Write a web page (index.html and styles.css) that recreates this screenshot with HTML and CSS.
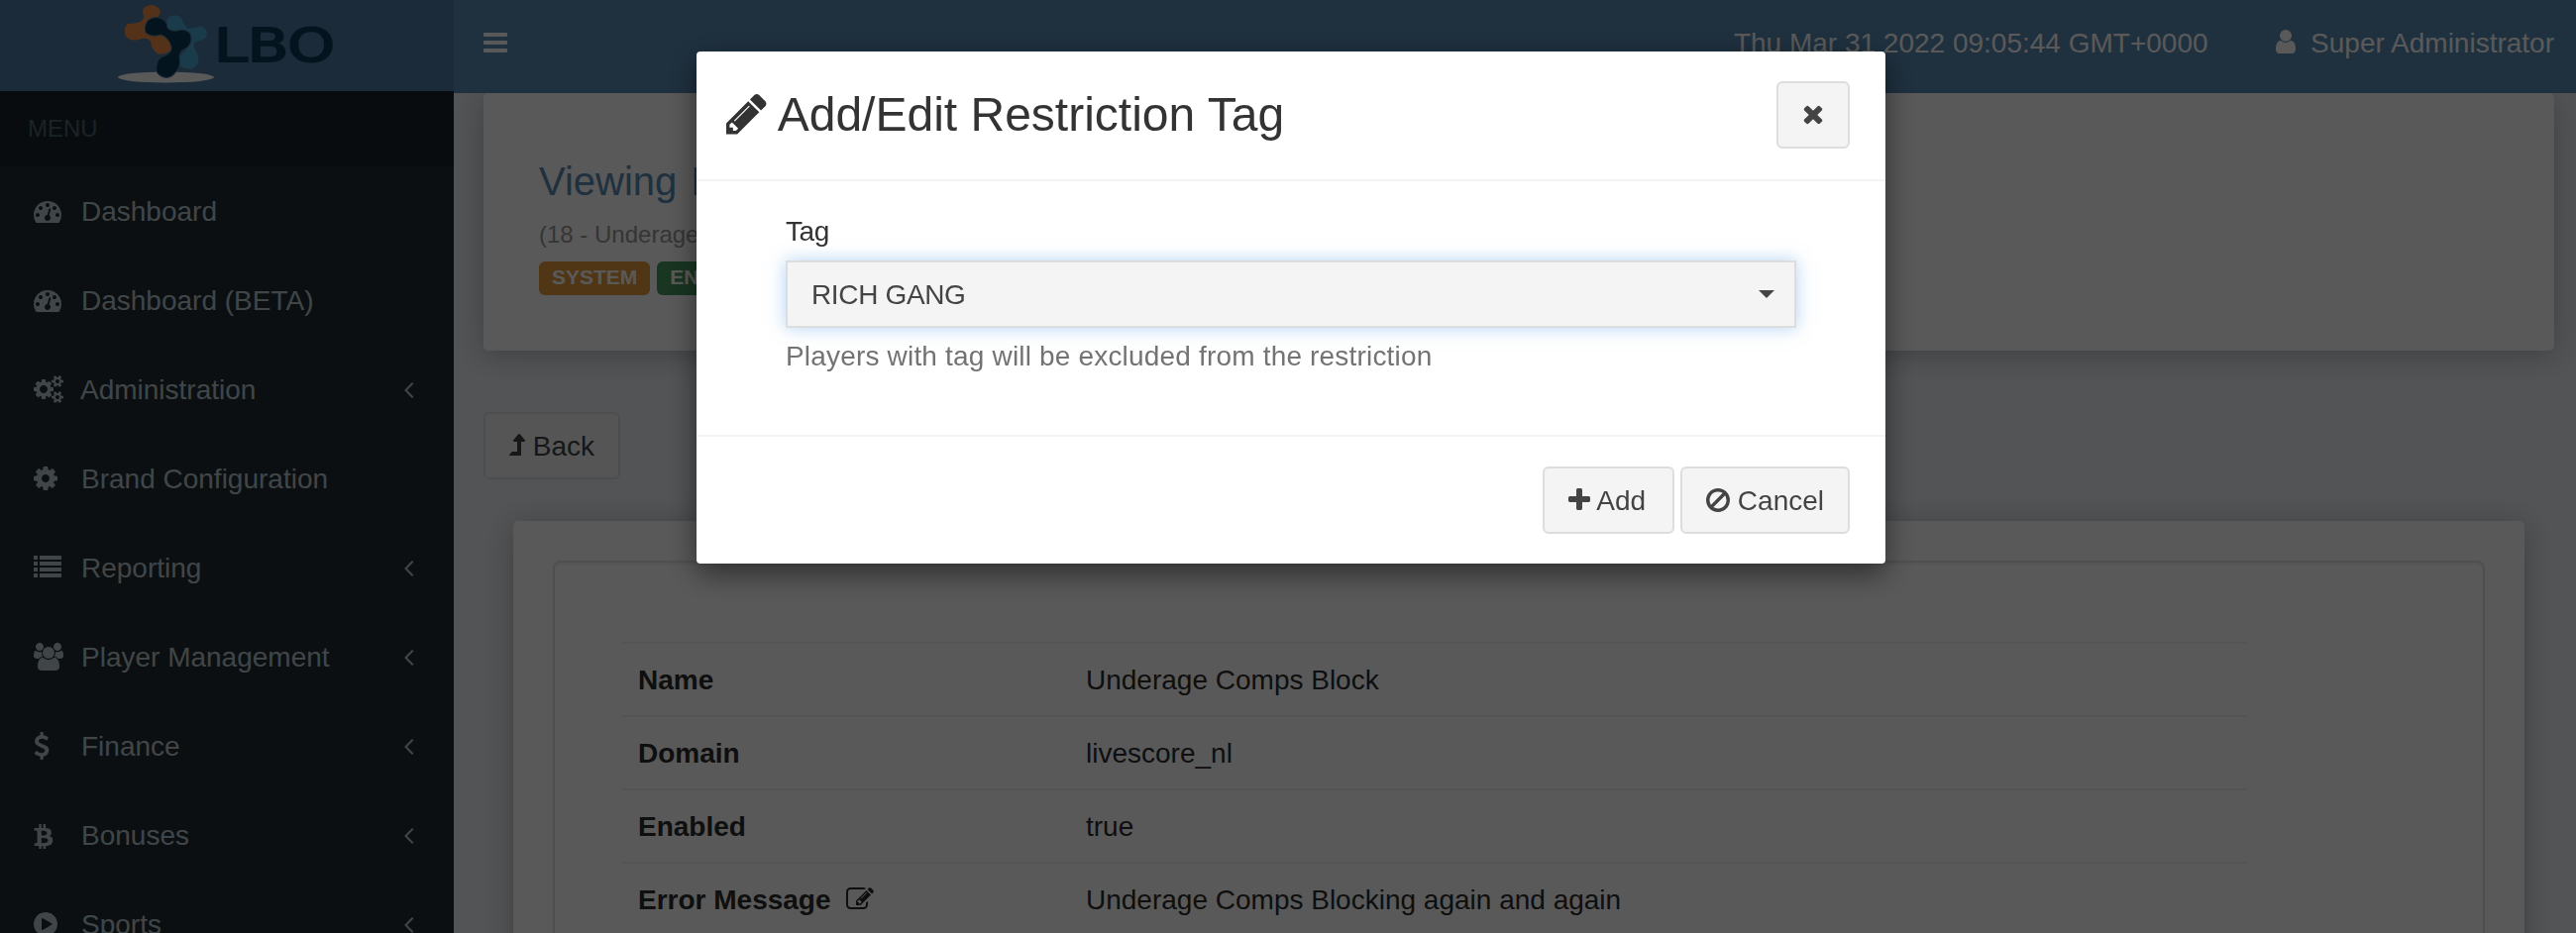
FILE: index.html
```
<!DOCTYPE html>
<html lang="en">
<head>
<meta charset="utf-8">
<title>Restriction</title>
<link rel="stylesheet" href="styles.css">
</head>
<body>
<svg class="defs" width="0" height="0">
  <symbol id="tachometer" viewBox="0 0 1792 1792"><path d="M384 1152q0-53-37.5-90.5t-90.5-37.5-90.5 37.5-37.5 90.5 37.5 90.5 90.5 37.5 90.5-37.5 37.5-90.5zm192-448q0-53-37.5-90.5t-90.5-37.5-90.5 37.5-37.5 90.5 37.5 90.5 90.5 37.5 90.5-37.5 37.5-90.5zm428 481l101-382q6-26-7.5-48.5t-38.5-29.5-48 6.5-30 39.5l-101 382q-60 5-107 43.5t-63 98.5q-20 77 20 146t117 89 146-20 89-117q16-60-6-117t-72-91zm660-33q0-53-37.5-90.5t-90.5-37.5-90.5 37.5-37.5 90.5 37.5 90.5 90.5 37.5 90.5-37.5 37.5-90.5zm-640-640q0-53-37.5-90.5t-90.5-37.5-90.5 37.5-37.5 90.5 37.5 90.5 90.5 37.5 90.5-37.5 37.5-90.5zm448 192q0-53-37.5-90.5t-90.5-37.5-90.5 37.5-37.5 90.5 37.5 90.5 90.5 37.5 90.5-37.5 37.5-90.5zm320 448q0 261-141 483-19 29-54 29h-1402q-35 0-54-29-141-221-141-483 0-182 71-348t191-286 286-191 348-71 348 71 286 191 191 286 71 348z"/></symbol>
  <symbol id="cog" viewBox="128 0 1536 1792"><path d="M1152 896q0-106-75-181t-181-75-181 75-75 181 75 181 181 75 181-75 75-181zm512-109v222q0 12-8 23t-20 13l-185 28q-19 54-39 91 35 50 107 138 10 12 10 25t-9 23q-27 37-99 108t-94 71q-12 0-26-9l-138-108q-44 23-91 38-16 136-29 186-7 28-36 28h-222q-14 0-24.5-8.5t-11.5-21.5l-28-184q-49-16-90-37l-141 107q-10 9-25 9-14 0-25-11-126-114-165-168-7-10-7-23 0-12 8-23 15-21 51-66.5t54-70.5q-27-50-41-99l-183-27q-13-2-21-12.5t-8-23.5v-222q0-12 8-23t19-13l186-28q14-46 39-92-40-57-107-138-10-12-10-24 0-10 9-23 26-36 98.5-107.5t94.5-71.5q13 0 26 10l138 107q44-23 91-38 16-136 29-186 7-28 36-28h222q14 0 24.5 8.5t11.5 21.5l28 184q49 16 90 37l142-107q9-9 24-9 13 0 25 10 129 119 165 170 7 8 7 22 0 12-8 23-15 21-51 66.5t-54 70.5q26 50 41 98l183 28q13 2 21 12.5t8 23.5z"/></symbol>
  <symbol id="cogs" viewBox="-64 0 1920 1792"><path d="M832 896q0-106-75-181t-181-75-181 75-75 181 75 181 181 75 181-75 75-181zm768 512q0-52-38-90t-90-38-90 38-38 90q0 53 37.5 90.5t90.5 37.5 90.5-37.5 37.5-90.5zm0-1024q0-52-38-90t-90-38-90 38-38 90q0 53 37.5 90.5t90.5 37.5 90.5-37.5 37.5-90.5zm-384 421v185q0 10-7 19.5t-16 10.5l-155 24q-11 35-32 76 34 48 90 115 7 11 7 20 0 12-7 19-23 30-82.5 89.5t-78.5 59.5q-11 0-21-7l-115-90q-37 19-77 31-11 108-23 155-7 24-30 24h-186q-11 0-20-7.5t-10-17.5l-23-153q-34-10-75-31l-118 89q-7 7-20 7-11 0-21-8-144-133-144-160 0-9 7-19 10-14 41-53t47-61q-23-44-35-82l-152-24q-10-1-17-9.5t-7-19.5v-185q0-10 7-19.5t16-10.5l155-24q11-35 32-76-34-48-90-115-7-11-7-20 0-12 7-20 22-30 82-89t79-59q11 0 21 7l115 90q34-18 77-32 11-108 23-154 7-24 30-24h186q11 0 20 7.5t10 17.5l23 153q34 10 75 31l118-89q8-7 20-7 11 0 21 8 144 133 144 160 0 8-7 19-12 16-42 54t-45 60q23 48 34 82l152 23q10 2 17 10.5t7 19.5zm640 533v140q0 16-149 31-12 27-30 52 51 113 51 138 0 4-4 7-122 71-124 71-8 0-46-47t-52-68q-20 2-30 2t-30-2q-14 21-52 68t-46 47q-2 0-124-71-4-3-4-7 0-25 51-138-18-25-30-52-149-15-149-31v-140q0-16 149-31 13-29 30-52-51-113-51-138 0-4 4-7 4-2 35-20t59-34 30-16q8 0 46 46.5t52 67.5q20-2 30-2t30 2q51-71 92-112l6-2q4 0 124 70 4 3 4 7 0 25-51 138 17 23 30 52 149 15 149 31zm0-1024v140q0 16-149 31-12 27-30 52 51 113 51 138 0 4-4 7-122 71-124 71-8 0-46-47t-52-68q-20 2-30 2t-30-2q-14 21-52 68t-46 47q-2 0-124-71-4-3-4-7 0-25 51-138-18-25-30-52-149-15-149-31v-140q0-16 149-31 13-29 30-52-51-113-51-138 0-4 4-7 4-2 35-20t59-34 30-16q8 0 46 46.5t52 67.5q20-2 30-2t30 2q51-71 92-112l6-2q4 0 124 70 4 3 4 7 0 25-51 138 17 23 30 52 149 15 149 31z"/></symbol>
  <symbol id="list" viewBox="0 0 1792 1792"><path d="M0 128h256v256H0zM384 128h1408v256H384zM0 512h256v256H0zM384 512h1408v256H384zM0 896h256v256H0zM384 896h1408v256H384zM0 1280h256v256H0zM384 1280h1408v256H384z"/></symbol>
  <symbol id="users" viewBox="0 0 1920 1792"><path d="M593 896q-162 5-265 128h-134q-82 0-138-40.5t-56-118.5q0-353 124-353 6 0 43.5 21t97.5 42.5 119 21.5q67 0 133-23-5 37-5 66 0 139 81 256zm1071 637q0 120-73 189.5t-194 69.5h-874q-121 0-194-69.5t-73-189.5q0-53 3.5-103.5t14-109 26.5-108.5 43-97.5 62-81 85.5-53.5 111.5-20q10 0 43 21.5t73 48 107 48 135 21.5 135-21.5 107-48 73-48 43-21.5q61 0 111.5 20t85.5 53.5 62 81 43 97.5 26.5 108.5 14 109 3.5 103.5zm-1024-1277q0 106-75 181t-181 75-181-75-75-181 75-181 181-75 181 75 75 181zm704 384q0 159-112.5 271.5t-271.5 112.5-271.5-112.5-112.5-271.5 112.5-271.5 271.5-112.5 271.5 112.5 112.5 271.5zm576 225q0 78-56 118.5t-138 40.5h-134q-103-123-265-128 81-117 81-256 0-29-5-66 66 23 133 23 59 0 119-21.5t97.5-42.5 43.5-21q124 0 124 353zm-128-609q0 106-75 181t-181 75-181-75-75-181 75-181 181-75 181 75 75 181z"/></symbol>
  <symbol id="dollar" viewBox="384 0 1024 1792"><path d="M1362 1185q0 153-99.5 263.5t-258.5 136.5v175q0 14-9 23t-23 9h-135q-13 0-22.5-9.5t-9.5-22.5v-175q-66-9-127.5-31t-101.5-44.5-74-48-46.5-37.5-17.5-18q-17-21-2-41l103-135q7-10 23-12 15-2 24 9l2 2q113 99 243 125 37 8 74 8 81 0 142.5-43t61.5-122q0-28-15-53t-33.5-42-58.5-37.5-66-32-80-32.5q-39-16-61.5-25t-61.5-26.5-62.5-31-56.5-35.5-53.5-42.5-43.5-49-35.5-58-21-66.5-8.5-78q0-138 98-242t255-134v-180q0-13 9.5-22.5t22.5-9.5h135q14 0 23 9t9 23v176q57 6 110.5 23t87 33.5 63.5 37.5 39 29 15 14q17 18 5 38l-81 146q-8 15-23 16-14 3-27-7-3-3-14.5-12t-39-26.5-58.5-32-74.5-26-85.5-11.5q-95 0-155 43t-60 111q0 26 8.5 48t29.5 41.5 39.5 33 56 31 60.5 27 70 27.5q53 20 81 31.5t76 35 75.5 42.5 62 50 53 63.5 31.5 76.5 13 94z"/></symbol>
  <symbol id="btc" viewBox="256 0 1280 1792"><path d="M1399 711q18 182-131 258 117 28 175 103t45 214q-7 71-32.5 125t-64.5 89-97 58.5-121.5 34.5-145.5 15v255h-154v-251q-80 0-122-1v252h-154v-255q-18 0-54-.5t-55-.5h-200l31-183h111q50 0 58-51v-402h16q-6-1-16-1v-287q-13-68-89-68h-111v-164l212 1q64 0 97-1v-252h154v247q82-2 122-2v-245h154v252q79 7 140 22.5t113 45 82.5 78 36.5 114.5zm-215 545q0-36-15-64t-37-46-57.5-30.5-65.5-18.5-74-9-69-3-64.5 1-47.5 1v338q8 0 37 .5t48 .5 53-1.5 58.5-4 57-8.5 55.5-14 47.5-21 39.5-30 24.5-40 9.5-51zm-71-476q0-33-12.5-58.5t-30.5-42-48-28-55-16.5-61.5-8-58-2.5-54 1-39.5.5v307q5 0 34.5.5t46.5 0 50-2 55-5.5 51.5-11 48.5-18.5 37-27 27-38.5 9-51z"/></symbol>
  <symbol id="play" viewBox="128 0 1536 1792"><path d="M896 128q209 0 385.5 103t279.5 279.5 103 385.5-103 385.5-279.5 279.5-385.5 103-385.5-103-279.5-279.5-103-385.5 103-385.5 279.5-279.5 385.5-103zm384 823q32-18 32-55t-32-55l-544-320q-31-19-64-1-32 19-32 56v640q0 37 32 56 16 8 32 8 17 0 32-9z"/></symbol>
  <symbol id="angle" viewBox="608 0 640 1792"><path d="M1203 544q0 13-10 23l-393 393 393 393q10 10 10 23t-10 23l-50 50q-10 10-23 10t-23-10l-466-466q-10-10-10-23t10-23l466-466q10-10 23-10t23 10l50 50q10 10 10 23z"/></symbol>
  <symbol id="bars" viewBox="128 0 1536 1792"><rect x="128" y="256" width="1536" height="256" rx="60"/><rect x="128" y="768" width="1536" height="256" rx="60"/><rect x="128" y="1280" width="1536" height="256" rx="60"/></symbol>
  <symbol id="user" viewBox="256 0 1280 1792"><path d="M1536 1399q0 109-62.5 187t-150.5 78h-854q-88 0-150.5-78t-62.5-187q0-85 8.5-160.5t31.5-152 58.5-131 94-89 134.5-34.5q131 128 313 128t313-128q76 0 134.5 34.5t94 89 58.5 131 31.5 152 8.5 160.5zm-256-887q0 159-112.5 271.5t-271.5 112.5-271.5-112.5-112.5-271.5 112.5-271.5 271.5-112.5 271.5 112.5 112.5 271.5z"/></symbol>
  <symbol id="pencil" viewBox="128 0 1536 1792"><path d="M491 1536l91-91-235-235-91 91v107h128v128h107zm523-928q0-22-22-22-10 0-17 7l-542 542q-7 7-7 17 0 22 22 22 10 0 17-7l542-542q7-7 7-17zm-54-192l416 416-832 832h-416v-416zm683 96q0 53-37 90l-166 166-416-416 166-165q36-38 90-38 53 0 91 38l235 234q37 39 37 91z"/></symbol>
  <symbol id="times" viewBox="192 0 1408 1792"><path d="M1490 1322q0 40-28 68l-136 136q-28 28-68 28t-68-28l-294-294-294 294q-28 28-68 28t-68-28l-136-136q-28-28-28-68t28-68l294-294-294-294q-28-28-28-68t28-68l136-136q28-28 68-28t68 28l294 294 294-294q28-28 68-28t68 28l136 136q28 28 28 68t-28 68l-294 294 294 294q28 28 28 68z"/></symbol>
  <symbol id="plus" viewBox="192 0 1408 1792"><path d="M1600 736v192q0 40-28 68t-68 28h-416v416q0 40-28 68t-68 28h-192q-40 0-68-28t-28-68v-416h-416q-40 0-68-28t-28-68v-192q0-40 28-68t68-28h416v-416q0-40 28-68t68-28h192q40 0 68 28t28 68v416h416q40 0 68 28t28 68z"/></symbol>
  <symbol id="ban" viewBox="128 0 1536 1792"><path d="M1440 893q0-161-87-295l-754 753q137 89 297 89 111 0 211.5-43.5t173.5-116.5 116-174.5 43-212.5zm-999 299l755-754q-135-91-300-91-148 0-273 73t-198 199-73 274q0 162 89 299zm1223-299q0 157-61 300t-163.5 246-245 164-298.5 61-298.5-61-245-164-163.5-246-61-300 61-299.5 163.5-245.5 245-164 298.5-61 298.5 61 245 164 163.5 245.5 61 299.5z"/></symbol>
  <symbol id="level-up" viewBox="281 -72 1024 1792"><path d="M1299 531q-18 37-58 37h-192v864q0 14-9 23t-23 9h-704q-21 0-29-18-8-20 4-35l160-192q9-11 25-11h320v-640h-192q-40 0-58-37-17-37 9-68l320-384q18-22 49-22t49 22l320 384q27 32 9 68z"/></symbol>
  <symbol id="edit" viewBox="0 0 1792 1792"><path d="M888 1184l116-116-152-152-116 116v56h96v96h56zm440-720q-16-16-33 1l-350 350q-17 17-1 33t33-1l350-350q17-17 1-33zm80 594v190q0 119-84.5 203.5t-203.5 84.5h-832q-119 0-203.5-84.5t-84.5-203.5v-832q0-119 84.5-203.5t203.5-84.5h832q63 0 117 25 15 7 18 23 3 17-9 29l-49 49q-14 14-32 8-23-6-45-6h-832q-66 0-113 47t-47 113v832q0 66 47 113t113 47h832q66 0 113-47t47-113v-126q0-13 9-22l64-64q15-15 35-7t20 29zm-96-738l288 288-672 672h-288v-288zm444 132l-92 92-288-288 92-92q28-28 68-28t68 28l152 152q28 28 28 68t-28 68z"/></symbol>
</svg>

<div class="app">
  <aside class="sidebar">
    <div class="logo">
      <svg width="240" height="92" viewBox="0 0 240 92">
        <ellipse cx="48.500" cy="78" rx="48.500" ry="5.500" fill="#fff"/>
        <g fill="#ee9148">
          <path d="M26 8Q34 2 41 8Q45 13 39 19Q35 22 37 28L40 35Q45 37 50 37Q56 42 54 50Q48 56 40 54Q34 50 33 42Q30 38 24 39Q14 43 8 37Q5 29 10 24Q17 24 23 22Q28 18 25 13Z"/>
        </g>
        <g fill="#4ba9d2">
          <path d="M50 19Q57 12 64 18Q66 25 71 29Q78 29 84 26Q92 31 89 38Q83 42 77 43Q76 48 81 56Q83 65 76 69Q68 71 63 66Q60 59 65 54Q73 49 72 38Q68 29 60 31Q51 32 48 26Z"/>
        </g>
        <g fill="#0d3a58" stroke="#507ca3" stroke-width="1">
          <path d="M31 20Q39 15 46 20Q50 23 50 28Q53 32 60 31Q68 28 73 34Q76 42 70 48Q62 51 62 57Q64 66 59 72Q54 80 46 78Q37 75 39 66Q40 58 48 56Q55 53 54 47Q51 38 44 35Q34 38 28 33Q26 25 31 20Z"/>
        </g>
        <text class="logo-text" x="97" y="61.500" textLength="122" lengthAdjust="spacingAndGlyphs">LBO</text>
      </svg>
    </div>
    <div class="menu-head">MENU</div>
    <nav>
      <a class="item"><svg class="ic w28"><use href="#tachometer"/></svg><span>Dashboard</span></a>
      <a class="item"><svg class="ic w28"><use href="#tachometer"/></svg><span>Dashboard (BETA)</span></a>
      <a class="item"><svg class="ic w30"><use href="#cogs"/></svg><span>Administration</span><svg class="ic w10"><use href="#angle"/></svg></a>
      <a class="item"><svg class="ic w24"><use href="#cog"/></svg><span>Brand Configuration</span></a>
      <a class="item"><svg class="ic w28"><use href="#list"/></svg><span>Reporting</span><svg class="ic w10"><use href="#angle"/></svg></a>
      <a class="item"><svg class="ic w30"><use href="#users"/></svg><span>Player Management</span><svg class="ic w10"><use href="#angle"/></svg></a>
      <a class="item"><svg class="ic w16"><use href="#dollar"/></svg><span>Finance</span><svg class="ic w10"><use href="#angle"/></svg></a>
      <a class="item"><svg class="ic w20"><use href="#btc"/></svg><span>Bonuses</span><svg class="ic w10"><use href="#angle"/></svg></a>
      <a class="item"><svg class="ic w24"><use href="#play"/></svg><span>Sports</span><svg class="ic w10"><use href="#angle"/></svg></a>
    </nav>
  </aside>
  <div class="main">
    <header class="navbar">
      <svg class="ic w24"><use href="#bars"/></svg>
      <span class="date">Thu Mar 31 2022 09:05:44 GMT+0000</span>
      <span class="account"><svg class="ic w20"><use href="#user"/></svg>&nbsp; Super Administrator</span>
    </header>
    <section class="card intro">
      <h3>Viewing Restriction</h3>
      <p>(18 - Underage Comps Block)</p>
      <div class="labels"><span class="label system">SYSTEM</span><span class="label enabled">ENABLED</span></div>
    </section>
    <button class="btn back"><svg class="ic w16"><use href="#level-up"/></svg> Back</button>
    <section class="card details">
      <div class="well">
        <dl>
          <div class="row"><dt>Name</dt><dd>Underage Comps Block</dd></div>
          <div class="row"><dt>Domain</dt><dd>livescore_nl</dd></div>
          <div class="row"><dt>Enabled</dt><dd>true</dd></div>
          <div class="row"><dt>Error Message&nbsp; <svg class="ic w28"><use href="#edit"/></svg></dt><dd>Underage Comps Blocking again and again</dd></div>
        </dl>
      </div>
    </section>
  </div>
</div>

<div class="backdrop">
  <div class="modal">
    <div class="modal-header">
      <h2><svg class="title-icon"><use href="#pencil"/></svg> Add/Edit Restriction Tag</h2>
      <button class="btn close"><svg class="ic w22"><use href="#times"/></svg></button>
    </div>
    <div class="modal-body">
      <label>Tag</label>
      <div class="select"><span>RICH GANG</span><i class="caret"></i></div>
      <p class="help">Players with tag will be excluded from the restriction</p>
    </div>
    <div class="modal-footer">
      <button class="btn add"><svg class="ic w22"><use href="#plus"/></svg> Add</button>
      <button class="btn"><svg class="ic w24"><use href="#ban"/></svg> Cancel</button>
    </div>
  </div>
</div>
</body>
</html>
```
FILE: styles.css
```
* { box-sizing: border-box; }
body {
  margin: 0;
  height: 942px;
  overflow: hidden;
  font: 28px/40px "Liberation Sans", Arial, sans-serif;
  color: #333;
  background: #ecf0f5;
}
h2, h3, p, dl, dd { margin: 0; }
.defs { display: block; }

.ic { height: 28px; fill: currentColor; vertical-align: -4px; flex: none; }
.w10 { width: 10px; }
.w16 { width: 16px; }
.w20 { width: 20px; }
.w22 { width: 22px; }
.w24 { width: 24px; }
.w28 { width: 28px; }
.w30 { width: 30px; }

.app { display: flex; height: 942px; overflow: hidden; }

.sidebar { width: 458px; flex: none; background: #222d32; }
.logo { height: 92px; padding-left: 119px; background: #507ca3; }
.logo svg { display: block; }
.logo-text {
  font: 47px "DejaVu Sans", sans-serif;
  fill: #0d3a58;
  stroke: #0d3a58;
  stroke-width: 2px;
  stroke-linejoin: round;
}
.menu-head {
  height: 76px;
  padding: 0 28px;
  font-size: 24px;
  line-height: 76px;
  color: #4b646f;
  background: #1c2328;
}
.item {
  display: flex;
  align-items: center;
  height: 90px;
  padding: 0 40px 0 34px;
  color: #b8c7ce;
}
.item span { flex: 1; padding-top: 2px; }
.item .ic.w10 { margin-top: -1px; }
.item .w16:first-child { margin-right: 32px; }
.item .w20:first-child { margin-right: 28px; }
.item .w24:first-child { margin-right: 24px; }
.item .w28:first-child { margin-right: 20px; }
.item .w30:first-child { margin-right: 18px; }
.item:nth-child(3) .w30 { margin-right: 17px; }

.main { flex: 1; min-width: 0; display: flex; flex-direction: column; align-items: flex-start; }
.navbar {
  position: relative;
  z-index: 1;
  align-self: stretch;
  flex: none;
  display: flex;
  align-items: center;
  height: 94px;
  padding: 0 22px 8px 30px;
  color: #fff;
  background: #598ab4;
}
.navbar span { padding-top: 1px; }
.navbar span .ic { vertical-align: -3px; }
.date { margin-left: auto; margin-right: 68px; }

.card { background: #fff; border-radius: 5px; box-shadow: 0 4px 30px rgba(0, 0, 0, .25); }
.intro { align-self: stretch; flex: none; height: 260px; margin: 0 22px 0 30px; padding: 62px 56px 0; }
.intro h3 { font-size: 40px; line-height: 54px; font-weight: normal; word-spacing: 3px; color: #598ab4; }
.intro p { margin-top: 10px; font-size: 24px; line-height: 34px; color: #999; }
.labels { display: flex; gap: 7px; margin-top: 10px; }
.label { height: 34px; padding: 0 13px; border-radius: 6px; font-size: 21px; line-height: 31px; font-weight: bold; color: #fff; }
.system { background: #e49a39; }
.enabled { background: #479a61; }

.btn {
  height: 68px;
  margin: 0;
  padding: 2px 24px 0;
  border: 2px solid #ddd;
  border-radius: 6px;
  font: inherit;
  color: #444;
  background: #f4f4f4;
}
.close { padding-top: 0; }
.add { width: 133px; text-align: left; }
.back { margin: 62px 0 42px 30px; flex: none; }

.details { align-self: stretch; height: 520px; flex: none; margin: 0 52px 0 60px; padding: 40px 40px 0; }
.well {
  height: 480px;
  padding: 80px 238px 0 68px;
  border: 2px solid #e3e3e3;
  border-radius: 8px;
  box-shadow: inset 0 2px 2px rgba(0, 0, 0, .05);
}
.row { display: flex; height: 74px; padding: 17px 16px 15px; border-top: 2px solid #f0f0f0; color: #2b2b2b; }
.row dt { width: 452px; font-weight: bold; }

.backdrop {
  position: fixed;
  inset: 0;
  z-index: 10;
  padding: 52px 0 0 703px;
  background: rgba(0, 0, 0, .65);
}
.modal { width: 1200px; height: 517px; border-radius: 4px; background: #fff; box-shadow: 0 10px 30px rgba(0, 0, 0, .5); }
.modal-header {
  display: flex;
  justify-content: space-between;
  height: 131px;
  padding: 30px 36px 0 30px;
  border-bottom: 2px solid #f4f4f4;
}
.modal-header h2 { font-size: 48px; line-height: 68px; font-weight: normal; }
.title-icon { width: 41px; height: 48px; fill: currentColor; vertical-align: -7px; }
.modal-body { height: 256px; padding: 31px 90px 0; }
.modal-body label { display: block; letter-spacing: -.4px; }
.select {
  display: flex;
  align-items: center;
  justify-content: space-between;
  height: 68px;
  margin-top: 9px;
  padding: 0 20px 0 24px;
  border: 2px solid #ddd;
  color: #444;
  background: #f4f4f4;
  box-shadow: 0 0 16px rgba(102, 165, 233, .5);
}
.select span { padding-top: 2px; letter-spacing: -.35px; }
.caret { border: 8px solid transparent; border-top-color: #444; border-bottom: 0; }
.help { margin-top: 9px; letter-spacing: .18px; color: #737373; }
.modal-footer { display: flex; justify-content: flex-end; gap: 6px; height: 130px; padding: 30px 36px 0; border-top: 2px solid #f4f4f4; }
```
